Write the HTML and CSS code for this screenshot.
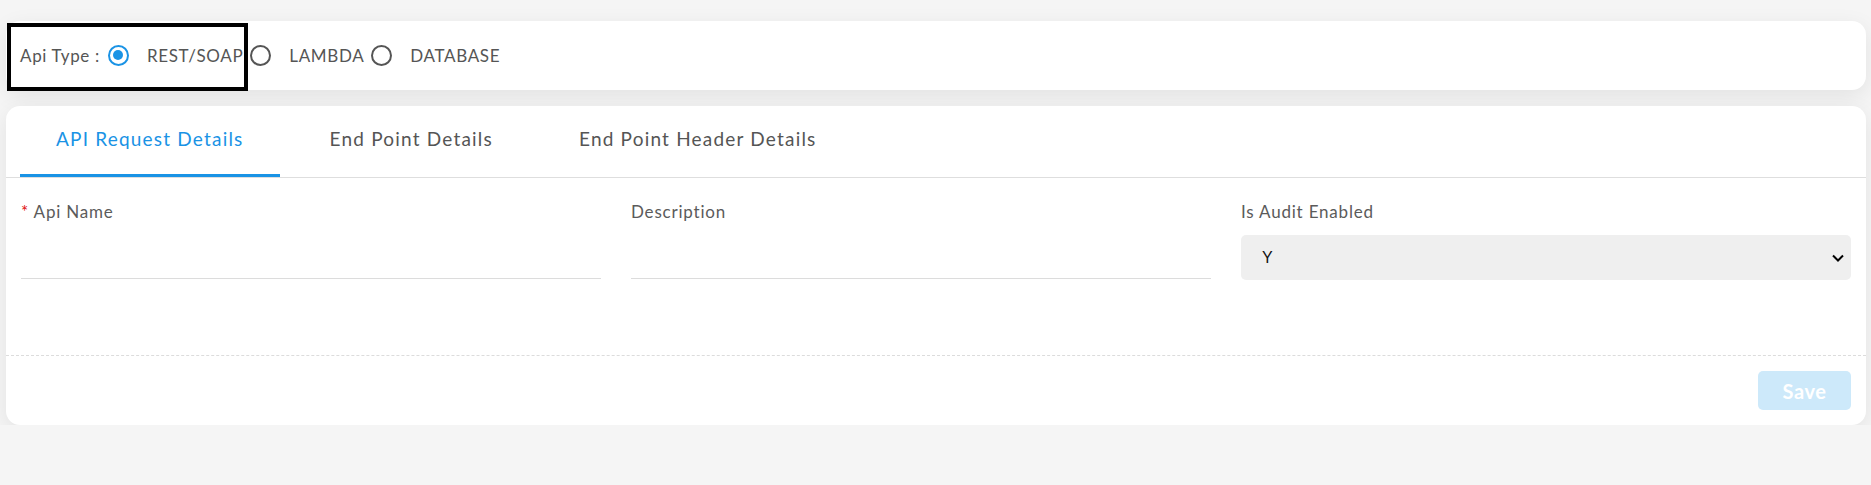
FILE: index.html
```html
<!DOCTYPE html>
<html>
<head>
<meta charset="utf-8">
<link rel="stylesheet" href="styles.css">
</head>
<body>
<div class="page">
  <div class="card type-card">
    <div class="type-group">
      <span class="type-label">Api Type :</span>
      <label class="radio"><span class="dot checked"></span><span class="rtext">REST/SOAP</span></label>
    </div>
    <label class="radio"><span class="dot"></span><span class="rtext">LAMBDA</span></label>
    <label class="radio"><span class="dot"></span><span class="rtext">DATABASE</span></label>
  </div>

  <div class="card main-card">
    <div class="tabs">
      <div class="tab active">API Request Details</div>
      <div class="tab">End Point Details</div>
      <div class="tab">End Point Header Details</div>
    </div>
    <div class="form-grid">
      <div class="field">
        <div class="flabel"><span class="req">*</span> Api Name</div>
        <div class="line-input"></div>
      </div>
      <div class="field">
        <div class="flabel">Description</div>
        <div class="line-input"></div>
      </div>
      <div class="field wide">
        <div class="flabel">Is Audit Enabled</div>
        <div class="select">
          <span class="sval">Y</span>
          <svg class="chev" width="12" height="8" viewBox="0 0 12 8"><path d="M1 1.5 L6 6.5 L11 1.5" fill="none" stroke="#000" stroke-width="2"/></svg>
        </div>
      </div>
    </div>
    <div class="footer">
      <button class="save">Save</button>
    </div>
  </div>
</div>
</body>
</html>
```

FILE: styles.css
```css
html, body {
  margin: 0;
  padding: 0;
  background: #f5f5f5;
}
body {
  font-family: Lato, "Noto Sans", sans-serif;
  color: #555;
}
.page {
  padding: 21px 5px 0 6px;
}
.card {
  background: #fff;
  border-radius: 14px;
  box-shadow: 0 6px 22px rgba(0, 0, 0, 0.08);
}
.type-card {
  height: 69px;
  display: flex;
  align-items: center;
  padding-left: 14px;
  font-size: 17px;
  letter-spacing: 0.65px;
}
.type-group {
  position: relative;
  align-self: stretch;
  display: flex;
  align-items: center;
}
.type-group::after {
  content: "";
  position: absolute;
  left: -13px;
  right: 2px;
  top: 2px;
  bottom: -1px;
  border: 4px solid #000;
}
.type-label {
  margin-right: 8px;
}
.radio {
  display: flex;
  align-items: center;
}
.dot {
  width: 21px;
  height: 21px;
  box-sizing: border-box;
  border: 2.8px solid #555;
  border-radius: 50%;
  margin-right: 18px;
  position: relative;
  flex: none;
}
.dot.checked {
  border-color: #1a93e5;
}
.dot.checked::after {
  content: "";
  position: absolute;
  left: 2.7px;
  top: 2.7px;
  width: 10px;
  height: 10px;
  border-radius: 50%;
  background: #1a93e5;
}
.rtext {
  margin-right: 7px;
}
.main-card {
  margin-top: 16px;
}
.tabs {
  display: flex;
  padding-left: 14px;
  gap: 14px;
  border-bottom: 1px solid #dedede;
}
.tab {
  height: 71px;
  box-sizing: border-box;
  padding: 0 36px 4px 36px;
  display: flex;
  align-items: center;
  font-size: 19px;
  letter-spacing: 1.2px;
  color: #555;
  border-bottom: 3px solid transparent;
}
.tab.active {
  color: #1a93e5;
  border-bottom-color: #1a93e5;
}
.form-grid {
  display: grid;
  grid-template-columns: 1fr 1fr 1fr;
  padding: 24px 15px 75px 15px;
}
.field {
  width: calc(100% - 30px);
}
.field.wide {
  width: 100%;
}
.flabel {
  font-size: 17px;
  letter-spacing: 0.8px;
  line-height: 19px;
  color: #5b5b5b;
  margin-bottom: 14px;
}
.req {
  color: #e01010;
}
.line-input {
  height: 44px;
  box-sizing: border-box;
  border-bottom: 1px solid #dcdcdc;
}
.select {
  height: 45px;
  box-sizing: border-box;
  background: #efefef;
  border-radius: 5px;
  display: flex;
  align-items: center;
  justify-content: space-between;
  padding: 0 7px 0 21px;
}
.sval {
  font-family: "Liberation Sans", Arial, sans-serif;
  font-size: 16px;
  color: #111;
}
.footer {
  border-top: 1px dashed #dcdcdc;
  padding: 15px;
  display: flex;
  justify-content: flex-end;
}
.save {
  width: 93px;
  height: 39px;
  border: none;
  border-radius: 5px;
  background: #cde9fa;
  color: #fff;
  font-family: Lato, sans-serif;
  font-weight: 700;
  font-size: 20px;
  letter-spacing: 0.6px;
  padding: 0;
}
```
